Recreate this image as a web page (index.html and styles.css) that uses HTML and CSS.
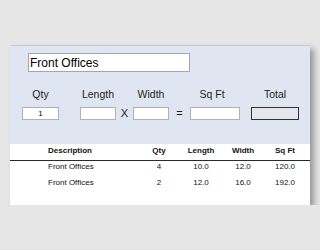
FILE: index.html
```html
<!DOCTYPE html>
<html lang="en">

<head>
    <meta charset="UTF-8">
    <meta name="viewport" content="width=device-width, initial-scale=1.0">
    <title>Area Calculator</title>
    <link rel="stylesheet" href="styles.css">
</head>

<body>
    <div class="panel">
        <div class="entry">
            <input class="name" type="text" value="Front Offices">
            <div class="fields">
                <span class="lbl c1">Qty</span>
                <span class="lbl c3">Length</span>
                <span class="lbl c5">Width</span>
                <span class="lbl c7 sqft">Sq Ft</span>
                <span class="lbl c9">Total</span>

                <input class="num c1" type="text" value="1">
                <input class="num c3" type="text">
                <span class="op c4">X</span>
                <input class="num c5" type="text">
                <span class="op c6">=</span>
                <input class="num c7" type="text">
                <div class="total c9"></div>
            </div>
        </div>
        <div class="list">
            <div class="row head">
                <span class="desc">Description</span>
                <span>Qty</span>
                <span>Length</span>
                <span>Width</span>
                <span>Sq Ft</span>
            </div>
            <div class="row">
                <span class="desc">Front Offices</span>
                <span>4</span>
                <span>10.0</span>
                <span>12.0</span>
                <span>120.0</span>
            </div>
            <div class="row">
                <span class="desc">Front Offices</span>
                <span>2</span>
                <span>12.0</span>
                <span>16.0</span>
                <span>192.0</span>
            </div>
        </div>
    </div>
</body>

</html>
```

FILE: styles.css
```css
* {
    margin: 0;
    padding: 0;
    box-sizing: border-box;
}

body {
    background-color: #e6e6e6;
    font-family: "Liberation Sans", Arial, sans-serif;
    color: #1e1e1e;
    padding-top: 45px;
}

.panel {
    width: 300px;
    margin-left: 10px;
    border-top: 1px solid #c9cbcf;
    background-color: #fff;
    box-shadow: 4px 4px 6px rgba(0, 0, 0, 0.35);
}

.entry {
    background-color: #dfe6f1;
    padding: 7px 0 24px 0;
}

.name {
    display: block;
    margin-left: 18px;
    width: 162px;
    height: 19px;
    border: 1px solid #a3a6aa;
    padding-left: 1px;
    font-family: "Liberation Sans", Arial, sans-serif;
    font-size: 12px;
    color: #000;
    background-color: #fff;
    outline: none;
}

.fields {
    display: grid;
    grid-template-columns: 37px 21px 36px 17px 36px 21px 50px 11px 48px;
    grid-template-rows: 13px 13px;
    row-gap: 6px;
    margin: 16px 0 0 12px;
}

.c1 { grid-column: 1; }
.c3 { grid-column: 3; }
.c4 { grid-column: 4; }
.c5 { grid-column: 5; }
.c6 { grid-column: 6; }
.c7 { grid-column: 7; }
.c9 { grid-column: 9; }

.lbl {
    grid-row: 1;
    font-size: 10.5px;
    line-height: 13px;
    text-align: center;
    white-space: nowrap;
}

.sqft {
    padding-right: 6px;
}

.num {
    grid-row: 2;
    width: 100%;
    height: 13px;
    border: 1px solid #aeb1b5;
    background-color: #fff;
    font-family: "Liberation Sans", Arial, sans-serif;
    font-size: 8px;
    text-align: center;
    color: #000;
    outline: none;
}

.op {
    grid-row: 2;
    font-size: 11px;
    line-height: 13px;
    text-align: center;
}

.total {
    grid-row: 2;
    height: 13px;
    border: 1px solid #333;
    background-color: #e3e7ed;
}

.list {
    padding-bottom: 12px;
}

.row {
    display: grid;
    grid-template-columns: 89px 40px 40px 40px 40px;
    column-gap: 2px;
    padding: 0 0 4px 38px;
    font-size: 8px;
    line-height: 12px;
    text-align: center;
    color: #111;
}

.row .desc {
    text-align: left;
}

.head {
    font-weight: bold;
    padding-top: 1px;
    padding-bottom: 3px;
    border-bottom: 1px solid #2a2a2a;
}
```
